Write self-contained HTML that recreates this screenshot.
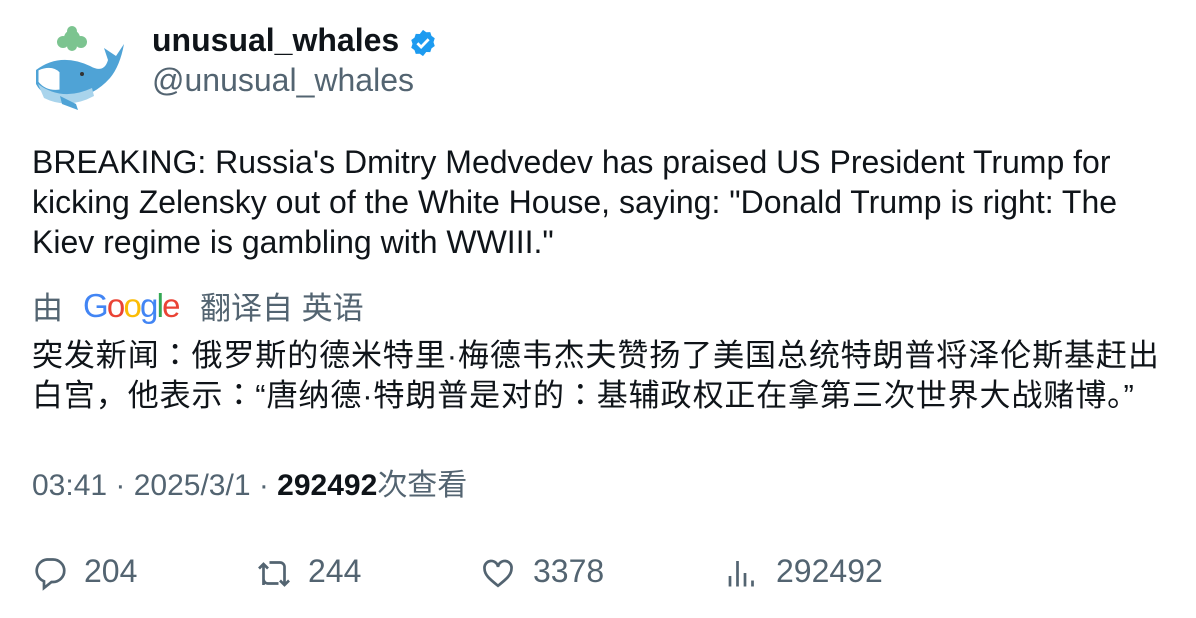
<html><head><style>
body{margin:0;width:1196px;height:618px;background:#fff;font-family:"Liberation Sans","Noto Sans CJK JP",sans-serif;color:#0f1419;position:relative;overflow:hidden}
.a{position:absolute;white-space:nowrap}
.g{color:#536471}
</style></head><body>
<svg class="a" style="left:32px;top:26px" width="96" height="86" viewBox="0 0 96 86">
<g fill="#7cc490"><circle cx="40" cy="12" r="8"/><circle cx="31" cy="16" r="6"/><circle cx="49" cy="16" r="6"/><circle cx="40" cy="5" r="5"/><circle cx="40" cy="20" r="5"/></g>
<path d="M4 44 Q28 26 58 40 Q72 48 76 34 L72 22 L84 30 L92 18 Q88 40 78 52 Q62 70 40 72 Q12 74 4 58 Z" fill="#4fa3d6"/>
<path d="M6 58 Q30 76 60 62 L62 70 Q36 84 12 72 Z" fill="#a9d4ec"/>
<path d="M6 44 Q20 38 28 46 L28 64 Q14 66 6 56 Z" fill="#fff" stroke="#4fa3d6" stroke-width="1"/>
<path d="M28 70 L44 78 L46 84 L30 78 Z" fill="#4fa3d6"/>
<circle cx="50" cy="48" r="2" fill="#333"/>
</svg>
<div class="a" style="left:152px;top:22px;font-size:32px;font-weight:bold">unusual_whales</div>
<svg class="a" style="left:408px;top:28px" width="30" height="30" viewBox="0 0 24 24"><path fill="#1d9bf0" d="M12 1.5l2.6 1.9 3.2-.1 1 3 2.6 1.9-1 3.1 1 3.1-2.6 1.9-1 3-3.2-.1L12 22.5l-2.6-1.9-3.2.1-1-3-2.6-1.9 1-3.1-1-3.1 2.6-1.9 1-3 3.2.1z"/><path d="M7.5 12.2l3 3 6-6.2" stroke="#fff" stroke-width="2.2" fill="none"/></svg>
<div class="a g" style="left:152px;top:62px;font-size:32px">@unusual_whales</div>
<div class="a" style="left:32px;top:142px;font-size:32px;line-height:40px">BREAKING: Russia's Dmitry Medvedev has praised US President Trump for<br>kicking Zelensky out of the White House, saying: "Donald Trump is right: The<br>Kiev regime is gambling with WWIII."</div>
<div class="a g" style="left:32px;top:283px;font-size:31px">由</div>
<div class="a" style="left:83px;top:287px;font-size:33px;letter-spacing:-1.8px"><span style="color:#4285f4">G</span><span style="color:#ea4335">o</span><span style="color:#fbbc05">o</span><span style="color:#4285f4">g</span><span style="color:#34a853">l</span><span style="color:#ea4335">e</span></div>
<div class="a g" style="left:200px;top:283px;font-size:31px">翻译自 英语</div>
<div class="a" style="left:32px;top:336px;font-size:31px;line-height:40px;letter-spacing:0.9px">突发新闻：俄罗斯的德米特里·梅德韦杰夫赞扬了美国总统特朗普将泽伦斯基赶出<br>白宫，他表示：“唐纳德·特朗普是对的：基辅政权正在拿第三次世界大战赌博。”</div>
<div class="a g" style="left:32px;top:460px;font-size:30px">03:41 · 2025/3/1 · <b style="color:#0f1419">292492</b>次查看</div>
<svg class="a" style="left:32px;top:555px" width="36" height="36" viewBox="0 0 24 24" fill="none" stroke="#536471" stroke-width="1.8"><path d="M10 3h4a7.5 7.5 0 0 1 0 15h-1l-5 4v-4.5A7.5 7.5 0 0 1 10 3z"/></svg>
<div class="a g" style="left:84px;top:553px;font-size:32px">204</div>
<svg class="a" style="left:256px;top:555px" width="36" height="36" viewBox="0 0 24 24" fill="none" stroke="#536471" stroke-width="1.8"><path d="M5 20V6m-3 3l3-3 3 3M9 5h7a3 3 0 0 1 3 3v12m-3-3l3 3 3-3M15 19H8a3 3 0 0 1-3-3"/></svg>
<div class="a g" style="left:308px;top:553px;font-size:32px">244</div>
<svg class="a" style="left:480px;top:555px" width="36" height="36" viewBox="0 0 24 24" fill="none" stroke="#536471" stroke-width="1.8"><path d="M12 20.5C7 16.5 3 13.5 3 9a4.5 4.5 0 0 1 9-1 4.5 4.5 0 0 1 9 1c0 4.5-4 7.5-9 11.5z"/></svg>
<div class="a g" style="left:533px;top:553px;font-size:32px">3378</div>
<svg class="a" style="left:724px;top:555px" width="36" height="36" viewBox="0 0 24 24" fill="none" stroke="#536471" stroke-width="1.8"><path d="M4 21v-7M9 21V4M14 21v-9M19 21v-4"/></svg>
<div class="a g" style="left:776px;top:553px;font-size:32px">292492</div>
</body></html>
